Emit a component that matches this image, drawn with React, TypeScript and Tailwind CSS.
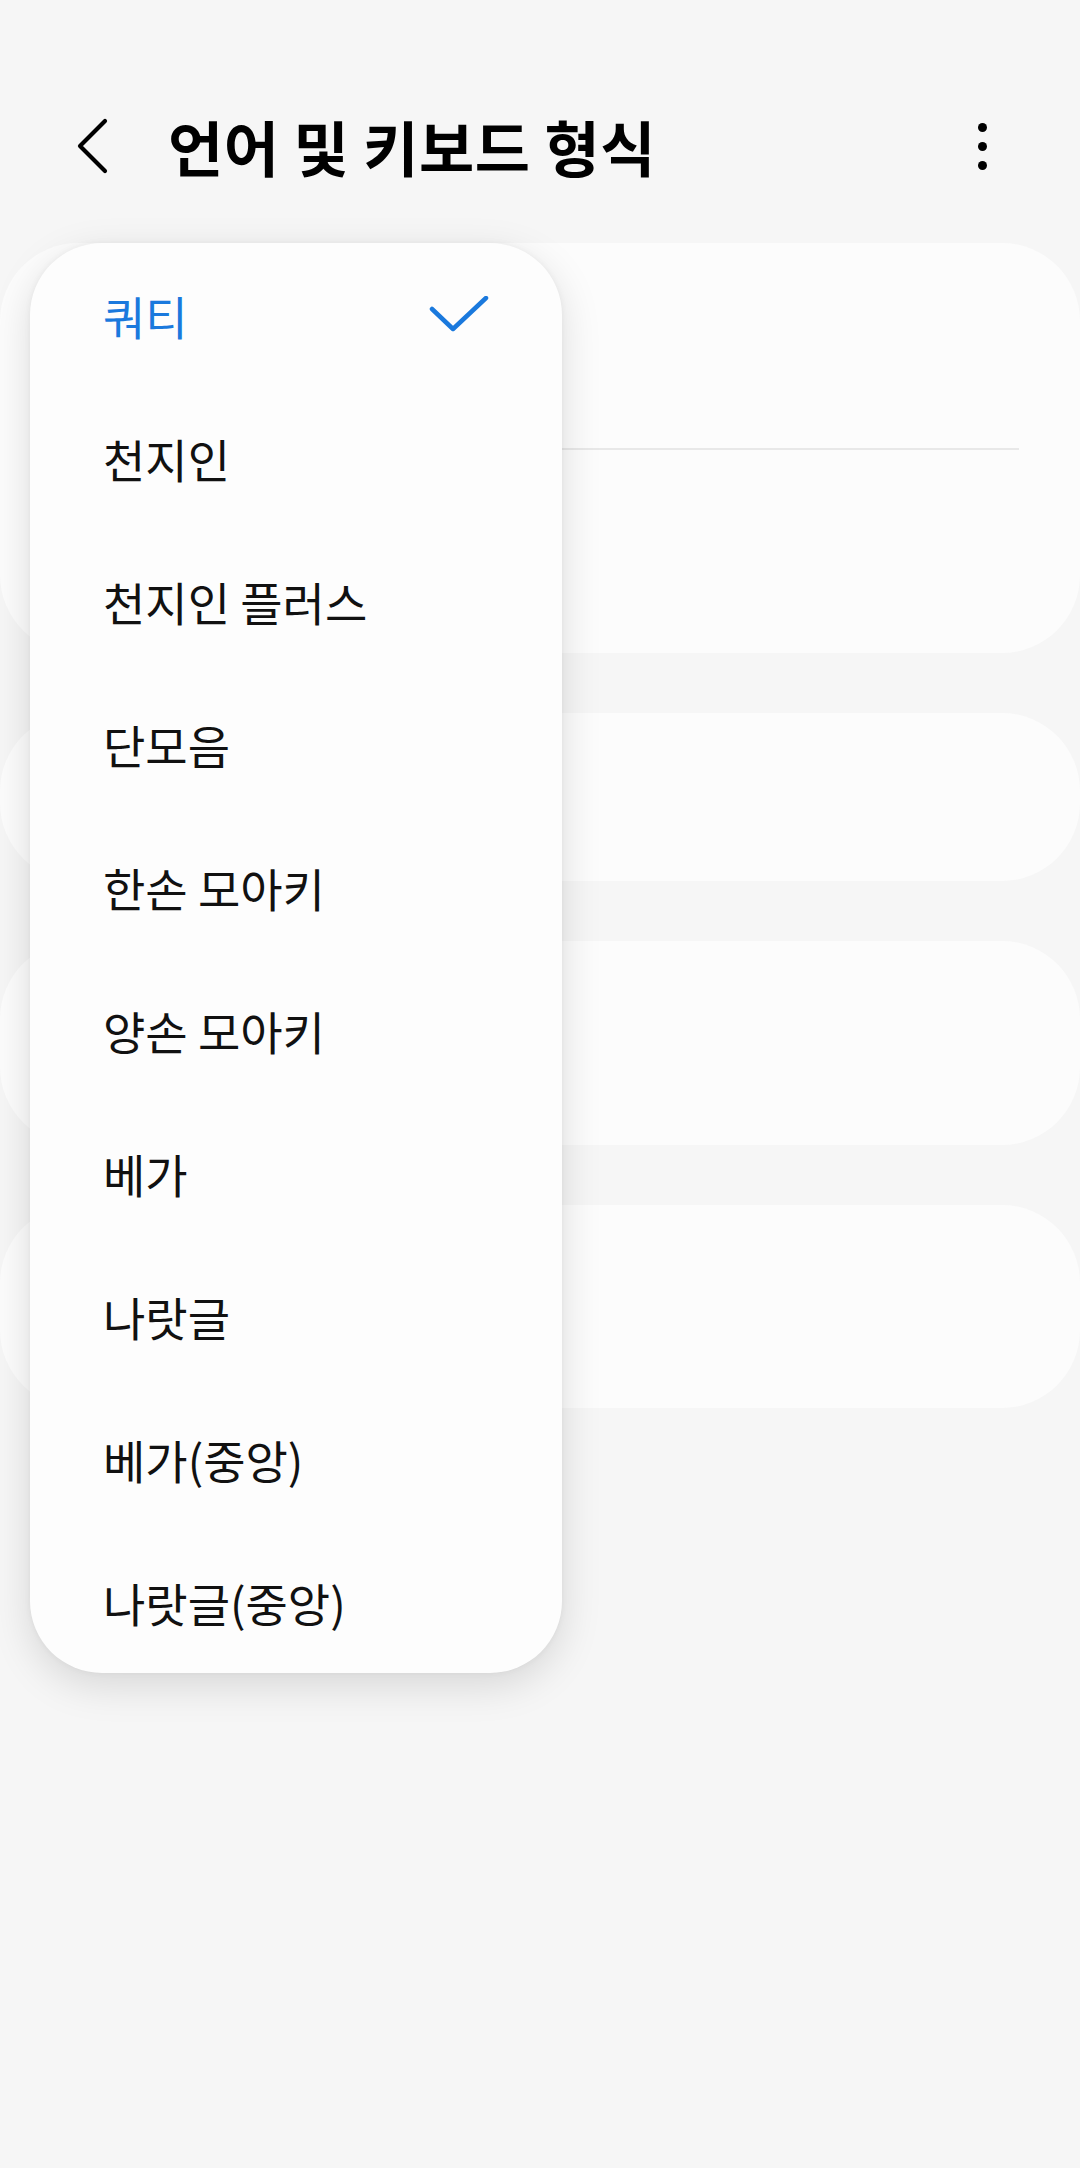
import React from "react";

const items = [
  "쿼티",
  "천지인",
  "천지인 플러스",
  "단모음",
  "한손 모아키",
  "양손 모아키",
  "베가",
  "나랏글",
  "베가(중앙)",
  "나랏글(중앙)",
];

export default function App() {
  return (
    <div
      className="relative w-[1080px] h-[2168px] overflow-hidden bg-[#f6f6f6] text-[#111]"
      style={{ fontFamily: '"Noto Sans CJK KR", "Noto Sans", sans-serif' }}
    >
      {/* Header */}
      <div className="flex items-center h-[100px] mt-[96px] pl-[76px] pr-[60px]">
        <svg width="34" height="56" viewBox="0 0 34 56" className="shrink-0">
          <path
            d="M29 3 L4 28 L29 53"
            fill="none"
            stroke="#000"
            strokeWidth="4.2"
            strokeLinecap="round"
            strokeLinejoin="round"
          />
        </svg>
        <div className="ml-[58px] text-[60px] font-bold leading-none tracking-[0.5px] text-black">
          언어 및 키보드 형식
        </div>
        <div className="ml-auto flex flex-col items-center gap-[10px] mr-[33px]">
          <span className="block w-[9px] h-[9px] rounded-full bg-black" />
          <span className="block w-[9px] h-[9px] rounded-full bg-black" />
          <span className="block w-[9px] h-[9px] rounded-full bg-black" />
        </div>
      </div>

      {/* Background cards */}
      <div className="flex flex-col gap-[60px] mt-[47px]">
        <div className="h-[410px] rounded-[78px] bg-[#fcfcfc] flex flex-col">
          <div className="h-[205px]" />
          <div className="h-[2px] bg-[#e8e8e8] ml-[100px] mr-[61px]" />
        </div>
        <div className="h-[168px] rounded-[78px] bg-[#fcfcfc]" />
        <div className="h-[204px] rounded-[78px] bg-[#fcfcfc]" />
        <div className="h-[203px] rounded-[78px] bg-[#fcfcfc]" />
      </div>

      {/* Popup menu */}
      <div className="absolute left-[30px] top-[243px] w-[532px] h-[1430px] rounded-[72px] bg-[#fdfdfd] shadow-[0_12px_40px_rgba(0,0,0,0.13),0_0_6px_rgba(0,0,0,0.05)] flex flex-col">
        {items.map((t, i) => (
          <div
            key={t}
            className="h-[143px] flex items-center justify-between pl-[73px] pr-[73px]"
          >
            <span
              className={
                "text-[46px] leading-none " +
                (i === 0 ? "text-[#1a79dd]" : "text-[#111]")
              }
            >
              {t}
            </span>
            {i === 0 && (
              <svg width="60" height="40" viewBox="0 0 60 40" className="mt-[2px]">
                <path
                  d="M3 13 L24 33 L57 2"
                  fill="none"
                  stroke="#1a79dd"
                  strokeWidth="4.5"
                  strokeLinecap="round"
                  strokeLinejoin="round"
                />
              </svg>
            )}
          </div>
        ))}
      </div>
    </div>
  );
}
